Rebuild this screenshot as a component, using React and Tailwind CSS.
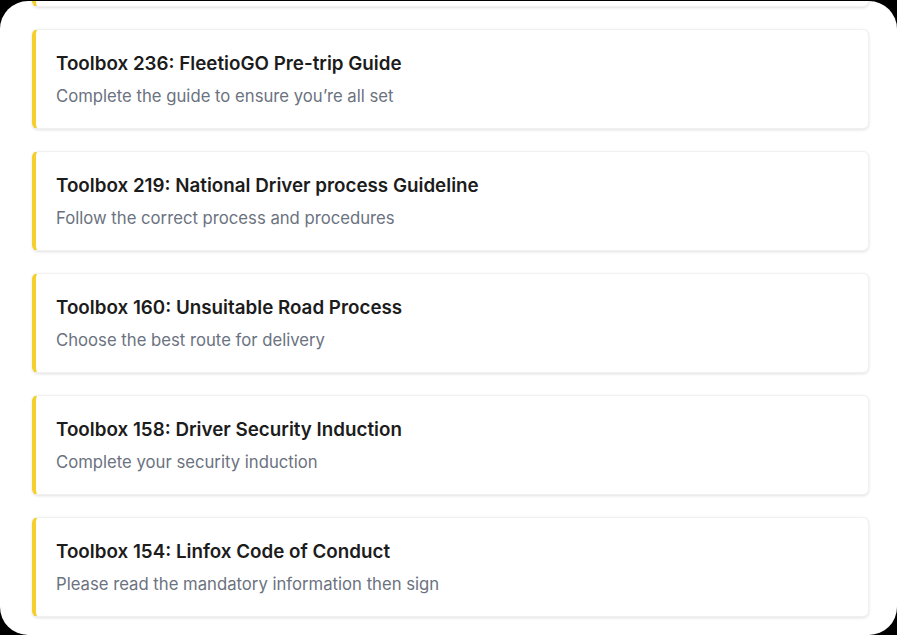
import React from 'react';

const toolboxes = [
  { id: 236, title: 'Toolbox 236: FleetioGO Pre-trip Guide', subtitle: 'Complete the guide to ensure you’re all set' },
  { id: 219, title: 'Toolbox 219: National Driver process Guideline', subtitle: 'Follow the correct process and procedures' },
  { id: 160, title: 'Toolbox 160: Unsuitable Road Process', subtitle: 'Choose the best route for delivery' },
  { id: 158, title: 'Toolbox 158: Driver Security Induction', subtitle: 'Complete your security induction' },
  { id: 154, title: 'Toolbox 154: Linfox Code of Conduct', subtitle: 'Please read the mandatory information then sign' },
];

const cardClass =
  'rounded-md border border-[#f1f1f1] border-l-4 border-l-[#f5cf2b] bg-white shadow-[0_1px_3px_rgba(0,0,0,0.12)]';

const ToolboxCard = ({ title, subtitle }) => (
  <div className={`${cardClass} p-5`}>
    <h3 className="text-[18.8px] leading-7 font-semibold text-[#1c1c1c]">{title}</h3>
    <p className="mt-1.5 text-[16.7px] leading-6 text-[#6b7280]">{subtitle}</p>
  </div>
);

export default function App() {
  return (
    <div
      className="h-[635px] w-[897px] bg-black pt-px"
      style={{ fontFamily: 'Inter, "Noto Sans", sans-serif' }}
    >
      <div className="h-[634px] overflow-hidden rounded-[28px] bg-white pl-8 pr-7">
        <div className="-mt-[94px] flex flex-col gap-[22px]">
          {/* previous item, scrolled out of view */}
          <div className={`${cardClass} h-[100px]`} />
          {toolboxes.map((t) => (
            <ToolboxCard key={t.id} title={t.title} subtitle={t.subtitle} />
          ))}
        </div>
      </div>
    </div>
  );
}
